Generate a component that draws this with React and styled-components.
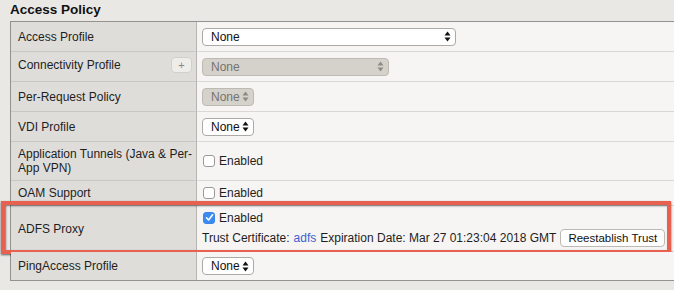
import styled, { createGlobalStyle } from 'styled-components';

const GlobalStyle = createGlobalStyle`
  body {
    margin: 0;
    background: #e9e8e5;
    font-family: "Liberation Sans", Arial, Helvetica, sans-serif;
    font-size: 12px;
    color: #1e1e1e;
  }
`;

const Page = styled.div`
  width: 674px;
  height: 290px;
  overflow: hidden;
  padding-left: 10px;
  box-sizing: border-box;
`;

const Title = styled.div`
  font-size: 13.5px;
  font-weight: bold;
  color: #111;
  height: 21px;
  line-height: 20px;
`;

const Table = styled.div`
  display: flex;
  flex-direction: column;
  border: 1px solid #939290;
  border-right: none;
`;

const Row = styled.div`
  position: relative;
  display: flex;
  height: ${p => p.$h}px;
`;

const Label = styled.div`
  width: 186px;
  box-sizing: border-box;
  flex-shrink: 0;
  background: #dfddda;
  border-right: 1px solid #b6b4b1;
  border-bottom: ${p => (p.$last ? 'none' : '1px solid #c9c7c4')};
  display: flex;
  align-items: ${p => (p.$top ? 'flex-start' : 'center')};
  justify-content: space-between;
  padding: ${p => (p.$top ? '6px 4px 0 7px' : '0 2px 0 7px')};
  line-height: 14px;
  white-space: nowrap;
`;

const Value = styled.div`
  flex: 1;
  background: #f6f5f3;
  border-bottom: ${p => (p.$last ? 'none' : '1px solid #dad8d5')};
  display: flex;
  flex-direction: column;
  justify-content: center;
  gap: 4px;
  padding-left: 5px;
`;

const PlusButton = styled.div`
  width: 21px;
  height: 16px;
  margin-top: -1px;
  box-sizing: border-box;
  border: 1px solid #d2d0cc;
  border-radius: 4px;
  background: #eeedea;
  color: #8a8781;
  font-size: 11px;
  display: flex;
  align-items: center;
  justify-content: center;
`;

const SelectBox = styled.div`
  width: ${p => p.$w}px;
  height: 18px;
  box-sizing: border-box;
  border: 1px solid ${p => (p.$disabled ? '#bdb9b3' : '#acaaa7')};
  border-radius: 4px;
  background: ${p => (p.$disabled ? '#d5d2cc' : '#ffffff')};
  color: ${p => (p.$disabled ? '#75726d' : '#111')};
  display: flex;
  align-items: center;
  justify-content: space-between;
  padding: 0 4px 0 8px;
  font-size: 12px;
`;

const CheckLine = styled.label`
  display: flex;
  align-items: center;
  gap: 4px;
  margin-left: 1px;
`;

const Box = styled.span`
  width: 12px;
  height: 12px;
  box-sizing: border-box;
  border-radius: 3px;
  border: 1px solid ${p => (p.$on ? '#3a84ea' : '#9d9b98')};
  background: ${p => (p.$on ? '#3b8cf2' : '#fff')};
  display: flex;
  align-items: center;
  justify-content: center;
`;

const CertLine = styled.div`
  display: flex;
  align-items: center;
  white-space: nowrap;
`;

const Link = styled.span`
  color: #3d5fd0;
  margin: 0 4px;
`;

const Button = styled.div`
  margin-left: 4px;
  height: 18px;
  padding: 0 7px;
  box-sizing: border-box;
  border: 1px solid #bcbab6;
  border-radius: 4px;
  background: #fff;
  display: flex;
  align-items: center;
  font-size: 11.5px;
  color: #111;
`;

const Highlight = styled.div`
  position: absolute;
  top: -5px;
  bottom: -2px;
  left: -10px;
  right: 3px;
  border: 4px solid #e8604f;
  box-shadow: 0 1px 2px rgba(0, 0, 0, 0.6), inset 1px 1px 2px rgba(0, 0, 0, 0.5);
  pointer-events: none;
`;

function Arrows({ color }) {
  return (
    <svg width="7" height="11" viewBox="0 0 7 11">
      <path d="M3.5 0.5 L6.5 4.5 L0.5 4.5 Z" fill={color} />
      <path d="M3.5 10.5 L6.5 6.5 L0.5 6.5 Z" fill={color} />
    </svg>
  );
}

function Select({ w, disabled }) {
  return (
    <SelectBox $w={w} $disabled={disabled}>
      None
      <Arrows color={disabled ? '#8e8a84' : '#111'} />
    </SelectBox>
  );
}

function Check({ on }) {
  return (
    <CheckLine>
      <Box $on={on}>
        {on && (
          <svg width="9" height="9" viewBox="0 0 9 9">
            <path d="M1.5 4.8 L3.6 7 L7.6 1.8" stroke="#fff" strokeWidth="1.6" fill="none" strokeLinecap="round" strokeLinejoin="round" />
          </svg>
        )}
      </Box>
      Enabled
    </CheckLine>
  );
}

export default function App() {
  return (
    <Page>
      <GlobalStyle />
      <Title>Access Policy</Title>
      <Table>
        <Row $h={30}>
          <Label>Access Profile</Label>
          <Value><Select w={254} /></Value>
        </Row>
        <Row $h={30}>
          <Label $top>
            Connectivity Profile
            <PlusButton>+</PlusButton>
          </Label>
          <Value><Select w={187} disabled /></Value>
        </Row>
        <Row $h={30}>
          <Label>Per-Request Policy</Label>
          <Value><Select w={52} disabled /></Value>
        </Row>
        <Row $h={30}>
          <Label>VDI Profile</Label>
          <Value><Select w={52} /></Value>
        </Row>
        <Row $h={39}>
          <Label>Application Tunnels (Java &amp; Per-<br />App VPN)</Label>
          <Value><Check /></Value>
        </Row>
        <Row $h={25}>
          <Label>OAM Support</Label>
          <Value><Check /></Value>
        </Row>
        <Row $h={46}>
          <Label>ADFS Proxy</Label>
          <Value>
            <Check on />
            <CertLine>
              Trust Certificate:<Link>adfs</Link>Expiration Date: Mar 27 01:23:04 2018 GMT
              <Button>Reestablish Trust</Button>
            </CertLine>
          </Value>
          <Highlight />
        </Row>
        <Row $h={28}>
          <Label $last>PingAccess Profile</Label>
          <Value $last><Select w={52} /></Value>
        </Row>
      </Table>
    </Page>
  );
}
